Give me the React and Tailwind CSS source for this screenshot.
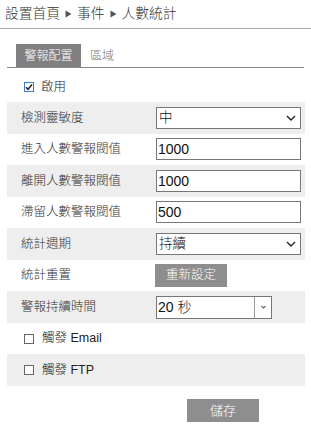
import React from "react";

const FONT = { fontFamily: '"Liberation Sans", "Noto Sans CJK TC", sans-serif' };

function Tri() {
  return (
    <svg width="7" height="8" viewBox="0 0 7 8" className="mx-[5px]">
      <path d="M0.5 0.5 L6.5 4 L0.5 7.5 Z" fill="#555" />
    </svg>
  );
}

function Chevron() {
  return (
    <svg width="10" height="6" viewBox="0 0 10 6">
      <path d="M1 1 L5 5 L9 1" fill="none" stroke="#222" strokeWidth="1.4" />
    </svg>
  );
}

function Check({ checked }) {
  return (
    <div
      className={
        "w-[10px] h-[10px] border bg-white flex items-center justify-center " +
        (checked ? "border-[#3f7fc4]" : "border-[#666]")
      }
    >
      {checked && (
        <svg width="8" height="8" viewBox="0 0 8 8">
          <path d="M1 4.2 L3 6.3 L7 1.5" fill="none" stroke="#222" strokeWidth="1.5" />
        </svg>
      )}
    </div>
  );
}

function Row({ grey, label, children }) {
  return (
    <div className={"h-[31.56px] flex items-center " + (grey ? "bg-[#eeeeee]" : "bg-white")}>
      <div className="w-[149px] pl-[14px] text-[12.5px] leading-none text-[#333]">{label}</div>
      {children}
    </div>
  );
}

function Select({ value }) {
  return (
    <div className="w-[145px] h-[22px] border border-[#777] bg-white flex items-center justify-between pl-[2px] pr-[4px]">
      <span className="text-[13.5px] leading-none text-[#111]">{value}</span>
      <Chevron />
    </div>
  );
}

function Input({ value }) {
  return (
    <div className="w-[145px] h-[22px] border border-[#777] bg-white flex items-center pl-[1px]">
      <span className="text-[14px] leading-none text-[#111]">{value}</span>
    </div>
  );
}

export default function App() {
  return (
    <div className="w-[311px] h-[437px] bg-white text-[#333] font-light" style={FONT}>
      <div className="h-[29px] border-b border-[#a8a8a8] pl-[5px] flex items-center text-[13.75px] leading-none text-[#333]">
        <span>設置首頁</span>
        <Tri />
        <span>事件</span>
        <Tri />
        <span>人數統計</span>
      </div>
      <div className="mt-[15px] mx-[7px] h-[24px] border-b border-[#8a8a8a] flex pl-[9px]">
        <div className="w-[65px] h-[23px] bg-[#808080] text-white text-[12px] leading-none flex items-center justify-center">
          警報配置
        </div>
        <div className="ml-[9px] h-[23px] text-[#777] text-[12px] leading-none flex items-center">區域</div>
      </div>
      <div className="h-[34px] flex items-center pt-[4px] pl-[24px]">
        <Check checked />
        <span className="ml-[7px] text-[12.5px] leading-none text-[#222]">啟用</span>
      </div>
      <div className="mx-[7px] w-[298px]">
        <Row grey label="檢測靈敏度">
          <Select value="中" />
        </Row>
        <Row label="進入人數警報閥值">
          <Input value="1000" />
        </Row>
        <Row grey label="離開人數警報閥值">
          <Input value="1000" />
        </Row>
        <Row label="滯留人數警報閥值">
          <Input value="500" />
        </Row>
        <Row grey label="統計週期">
          <Select value="持續" />
        </Row>
        <Row label="統計重置">
          <div className="-ml-[1px] w-[72px] h-[23px] bg-[#8e8e8e] text-white text-[12.5px] leading-none flex items-center justify-center">
            重新設定
          </div>
        </Row>
        <Row grey label="警報持續時間">
          <div className="w-[116px] h-[23px] border border-[#777] bg-white flex items-center">
            <span className="flex-1 pl-[1px] text-[14px] leading-none text-[#111]">20 秒</span>
            <div className="w-[17px] h-full border-l border-[#999] flex items-center justify-center">
              <svg width="5" height="4" viewBox="0 0 5 4">
                <path d="M0.5 0.8 L2.5 3 L4.5 0.8" fill="none" stroke="#555" strokeWidth="1.1" />
              </svg>
            </div>
          </div>
        </Row>
        <div className="h-[31.56px] flex items-center pl-[17px] bg-white">
          <Check />
          <span className="ml-[8px] text-[12.5px] leading-none text-[#222]">觸發 Email</span>
        </div>
        <div className="h-[31.56px] flex items-center pl-[17px] bg-[#eeeeee]">
          <Check />
          <span className="ml-[8px] text-[12.5px] leading-none text-[#222]">觸發 FTP</span>
        </div>
      </div>
      <div className="mt-[13px] ml-[187px] w-[72px] h-[23px] bg-[#8e8e8e] text-white text-[13px] leading-none flex items-center justify-center">
        儲存
      </div>
    </div>
  );
}
